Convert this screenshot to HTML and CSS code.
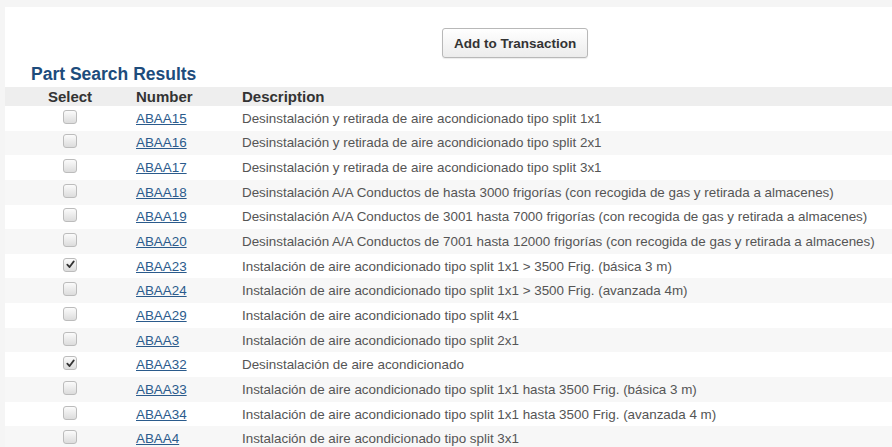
FILE: index.html
```html
<!DOCTYPE html>
<html>
<head>
<meta charset="utf-8">
<link rel="stylesheet" href="styles.css">
</head>
<body>
<div class="panel">
  <div class="toolbar">
    <button class="btn" type="button">Add to Transaction</button>
  </div>
  <h2 class="title">Part Search Results</h2>
  <div class="results">
    <div class="row head">
      <div class="c-sel">Select</div>
      <div class="c-num">Number</div>
      <div class="c-desc">Description</div>
    </div>
    <div class="row"><div class="c-sel"><span class="cb"></span></div><div class="c-num"><a href="#">ABAA15</a></div><div class="c-desc">Desinstalación y retirada de aire acondicionado tipo split 1x1</div></div>
    <div class="row"><div class="c-sel"><span class="cb"></span></div><div class="c-num"><a href="#">ABAA16</a></div><div class="c-desc">Desinstalación y retirada de aire acondicionado tipo split 2x1</div></div>
    <div class="row"><div class="c-sel"><span class="cb"></span></div><div class="c-num"><a href="#">ABAA17</a></div><div class="c-desc">Desinstalación y retirada de aire acondicionado tipo split 3x1</div></div>
    <div class="row"><div class="c-sel"><span class="cb"></span></div><div class="c-num"><a href="#">ABAA18</a></div><div class="c-desc">Desinstalación A/A Conductos de hasta 3000 frigorías (con recogida de gas y retirada a almacenes)</div></div>
    <div class="row"><div class="c-sel"><span class="cb"></span></div><div class="c-num"><a href="#">ABAA19</a></div><div class="c-desc">Desinstalación A/A Conductos de 3001 hasta 7000 frigorías (con recogida de gas y retirada a almacenes)</div></div>
    <div class="row"><div class="c-sel"><span class="cb"></span></div><div class="c-num"><a href="#">ABAA20</a></div><div class="c-desc">Desinstalación A/A Conductos de 7001 hasta 12000 frigorías (con recogida de gas y retirada a almacenes)</div></div>
    <div class="row"><div class="c-sel"><span class="cb checked"><svg viewBox="0 0 12 12" width="11" height="11"><path d="M2.5 6.2 L5 8.8 L9.6 2.6" fill="none" stroke="#333" stroke-width="1.9" stroke-linecap="round" stroke-linejoin="round"/></svg></span></div><div class="c-num"><a href="#">ABAA23</a></div><div class="c-desc">Instalación de aire acondicionado tipo split 1x1 &gt; 3500 Frig. (básica 3 m)</div></div>
    <div class="row"><div class="c-sel"><span class="cb"></span></div><div class="c-num"><a href="#">ABAA24</a></div><div class="c-desc">Instalación de aire acondicionado tipo split 1x1 &gt; 3500 Frig. (avanzada 4m)</div></div>
    <div class="row"><div class="c-sel"><span class="cb"></span></div><div class="c-num"><a href="#">ABAA29</a></div><div class="c-desc">Instalación de aire acondicionado tipo split 4x1</div></div>
    <div class="row"><div class="c-sel"><span class="cb"></span></div><div class="c-num"><a href="#">ABAA3</a></div><div class="c-desc">Instalación de aire acondicionado tipo split 2x1</div></div>
    <div class="row"><div class="c-sel"><span class="cb checked"><svg viewBox="0 0 12 12" width="11" height="11"><path d="M2.5 6.2 L5 8.8 L9.6 2.6" fill="none" stroke="#333" stroke-width="1.9" stroke-linecap="round" stroke-linejoin="round"/></svg></span></div><div class="c-num"><a href="#">ABAA32</a></div><div class="c-desc">Desinstalación de aire acondicionado</div></div>
    <div class="row"><div class="c-sel"><span class="cb"></span></div><div class="c-num"><a href="#">ABAA33</a></div><div class="c-desc">Instalación de aire acondicionado tipo split 1x1 hasta 3500 Frig. (básica 3 m)</div></div>
    <div class="row"><div class="c-sel"><span class="cb"></span></div><div class="c-num"><a href="#">ABAA34</a></div><div class="c-desc">Instalación de aire acondicionado tipo split 1x1 hasta 3500 Frig. (avanzada 4 m)</div></div>
    <div class="row"><div class="c-sel"><span class="cb"></span></div><div class="c-num"><a href="#">ABAA4</a></div><div class="c-desc">Instalación de aire acondicionado tipo split 3x1</div></div>
  </div>
</div>
</body>
</html>
```

FILE: styles.css
```css
html, body {
  margin: 0;
  padding: 0;
  background: #f5f5f5;
  overflow: hidden;
}
body {
  font-family: "Liberation Sans", Arial, sans-serif;
  color: #555;
}
.panel {
  margin: 7px 0 0 5px;
  background: #fff;
  padding-top: 21px;
  min-height: 440px;
}
.toolbar {
  display: flex;
  padding-left: 437px;
}
.btn {
  box-sizing: border-box;
  height: 30px;
  padding: 0 11px;
  border: 1px solid #b8b8b8;
  border-radius: 3px;
  background: linear-gradient(#ffffff, #ececec);
  box-shadow: 0 1px 1px rgba(0,0,0,0.08);
  font-family: "Liberation Sans", Arial, sans-serif;
  font-weight: bold;
  font-size: 13.5px;
  color: #333;
  white-space: nowrap;
}
.title {
  margin: 5px 0 2px 26px;
  font-size: 17.5px;
  line-height: 22px;
  font-weight: bold;
  color: #1d4c7c;
}
.results {
  display: flex;
  flex-direction: column;
}
.row {
  display: grid;
  grid-template-columns: 130px 106px 1fr;
  align-items: center;
  height: 24.65px;
  font-size: 13.4px;
  white-space: nowrap;
}
.row:nth-child(odd) {
  background: #f7f7f7;
}
.row.head {
  height: 19px;
  background: #eeeeee;
  font-size: 15px;
  font-weight: bold;
  color: #333;
}
.c-sel {
  display: flex;
  justify-content: center;
}
.c-num, .c-desc {
  padding-left: 1px;
}
.c-num a {
  color: #2b5b8c;
  text-decoration: underline;
}
.cb {
  box-sizing: border-box;
  width: 14px;
  height: 14px;
  border: 1px solid #bcbcbc;
  border-radius: 3px;
  background: linear-gradient(#fbfbfb, #dcdcdc);
  display: flex;
  align-items: center;
  justify-content: center;
  margin-top: -3px;
}
```
